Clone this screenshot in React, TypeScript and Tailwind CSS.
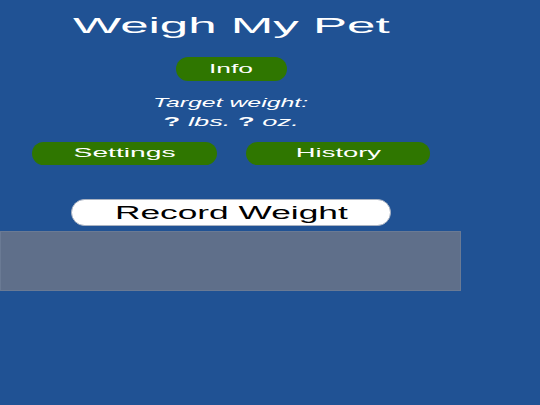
export default function App() {
  return (
    <div className="min-h-[405px] w-full bg-[#205294] font-['Liberation_Sans',Arial,sans-serif]">
      <div className="flex w-[462px] flex-col items-center pt-[15px]">
        {/* title */}
        <h1 className="h-[22px] text-[22px] leading-[22px] text-white">
          <span className="inline-block scale-x-[2.32]">Weigh My Pet</span>
        </h1>

        <button className="mt-[20px] flex h-[24px] w-[111px] items-center justify-center rounded-full bg-[#2f7600] text-[12px] leading-none text-white">
          <span className="inline-block scale-x-[2.2]">Info</span>
        </button>

        {/* target weight */}
        <div className="mt-[12px] flex flex-col items-center text-[13px] leading-[19px] text-white">
          <span className="inline-block scale-x-[1.91] italic">Target weight:</span>
          <span className="inline-block scale-x-[2.1]">
            <b>?</b> <i>lbs.</i> <b>?</b> <i>oz.</i>
          </span>
        </div>

        <div className="mt-[11px] flex gap-[29px]">
          <button className="flex h-[23px] w-[185px] items-center justify-center rounded-full bg-[#2f7600] text-[12.5px] leading-none text-white">
            <span className="inline-block scale-x-[2.26]">Settings</span>
          </button>
          <button className="flex h-[23px] w-[184px] items-center justify-center rounded-full bg-[#2f7600] text-[12.5px] leading-none text-white">
            <span className="inline-block scale-x-[2.19]">History</span>
          </button>
        </div>

        <button className="mt-[34px] flex h-[27px] w-[320px] items-center justify-center rounded-full border border-[#aab3c2] bg-white text-[18px] leading-none text-black">
          <span className="inline-block scale-x-[1.96]">Record Weight</span>
        </button>

        {/* weight readout panel */}
        <div className="mt-[5px] h-[60px] w-[461px] self-start border border-[#6a7a94] bg-[#5f6f8a]" />
      </div>
    </div>
  );
}
